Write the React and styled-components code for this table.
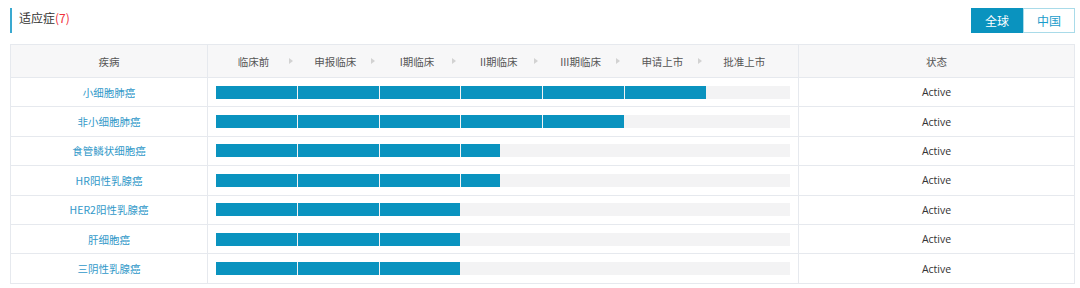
import React from "react";
import styled, { createGlobalStyle } from "styled-components";

const GlobalStyle = createGlobalStyle`
  body {
    margin: 0;
    background: #fff;
    font-family: "Noto Sans CJK SC", "Open Sans", sans-serif;
  }
`;

const STAGES = ["临床前", "申报临床", "I期临床", "II期临床", "III期临床", "申请上市", "批准上市"];

const ROWS = [
  { name: "小细胞肺癌", progress: 6 },
  { name: "非小细胞肺癌", progress: 5 },
  { name: "食管鳞状细胞癌", progress: 3.47 },
  { name: "HR阳性乳腺癌", progress: 3.47 },
  { name: "HER2阳性乳腺癌", progress: 3 },
  { name: "肝细胞癌", progress: 3 },
  { name: "三阴性乳腺癌", progress: 3 },
];

const Page = styled.div`
  padding: 8px 5px 0 10px;
  width: 1065px;
`;

const TopBar = styled.div`
  display: flex;
  justify-content: space-between;
  align-items: flex-start;
  height: 36px;
`;

const Title = styled.div`
  border-left: 2px solid #3aa9d0;
  height: 25px;
  line-height: 20px;
  padding-left: 7px;
  font-size: 12px;
  color: #333;
`;

const Count = styled.span`
  color: #f0303a;
`;

const Toggle = styled.div`
  display: flex;
`;

const ToggleButton = styled.div`
  width: 52px;
  height: 25px;
  box-sizing: border-box;
  display: flex;
  align-items: center;
  justify-content: center;
  font-size: 12px;
  border: 1px solid ${(p) => (p.$active ? "#0a93bf" : "#a9dbe9")};
  background: ${(p) => (p.$active ? "#0a93bf" : "#fff")};
  color: ${(p) => (p.$active ? "#fff" : "#1a9ccb")};
`;

const Table = styled.div`
  border: 1px solid #e6e9ee;
  border-top: none;
  display: grid;
  grid-template-columns: 196px 591px 1fr;
`;

const HeadCell = styled.div`
  height: 33px;
  box-sizing: border-box;
  border-top: 1px solid #e6e9ee;
  border-left: ${(p) => (p.$first ? "none" : "1px solid #e6e9ee")};
  background: #f7f7f8;
  display: flex;
  align-items: center;
  justify-content: ${(p) => (p.$stages ? "flex-start" : "center")};
  padding-left: ${(p) => (p.$stages ? "8px" : "0")};
  font-size: 10.5px;
  color: #555;
`;

const Stage = styled.div`
  position: relative;
  width: 81.8px;
  padding-right: 7px;
  box-sizing: border-box;
  text-align: center;
  &:not(:last-child)::after {
    content: "";
    position: absolute;
    right: 5px;
    top: 50%;
    margin-top: -3px;
    border-left: 4px solid #d2d2d2;
    border-top: 3px solid transparent;
    border-bottom: 3px solid transparent;
  }
`;

const Cell = styled.div`
  height: 29.4px;
  box-sizing: border-box;
  border-top: 1px solid #e6e9ee;
  border-left: ${(p) => (p.$first ? "none" : "1px solid #e6e9ee")};
  display: flex;
  align-items: center;
  justify-content: ${(p) => (p.$bar ? "flex-start" : "center")};
  padding-left: ${(p) => (p.$bar ? "8px" : "0")};
  font-size: 10.5px;
  color: ${(p) => (p.$link ? "#3199c9" : "#333")};
  font-family: ${(p) =>
    p.$latin ? '"Open Sans", "Noto Sans CJK SC", sans-serif' : "inherit"};
`;

const Track = styled.div`
  width: 574px;
  height: 13px;
  background: #f3f3f4;
  display: flex;
`;

const Segment = styled.div`
  height: 13px;
  background: #0a93bf;
  margin-right: 1px;
  flex: none;
`;

const ProgressBar = ({ progress }) => {
  const full = Math.floor(progress);
  const rest = progress - full;
  const segs = Array.from({ length: full }, () => 80.8);
  if (rest > 0) segs.push(Math.round(rest * 82));
  return (
    <Track>
      {segs.map((w, i) => (
        <Segment key={i} style={{ width: w }} />
      ))}
    </Track>
  );
};

const App = () => {
  return (
    <Page>
      <GlobalStyle />
      <TopBar>
        <Title>
          适应症<Count>(7)</Count>
        </Title>
        <Toggle>
          <ToggleButton $active>全球</ToggleButton>
          <ToggleButton>中国</ToggleButton>
        </Toggle>
      </TopBar>
      <Table>
        <HeadCell $first>疾病</HeadCell>
        <HeadCell $stages>
          {STAGES.map((s) => (
            <Stage key={s}>{s}</Stage>
          ))}
        </HeadCell>
        <HeadCell>状态</HeadCell>
        {ROWS.map((r) => (
          <React.Fragment key={r.name}>
            <Cell $first $link>
              {r.name}
            </Cell>
            <Cell $bar>
              <ProgressBar progress={r.progress} />
            </Cell>
            <Cell $latin>Active</Cell>
          </React.Fragment>
        ))}
      </Table>
    </Page>
  );
};

export default App;
